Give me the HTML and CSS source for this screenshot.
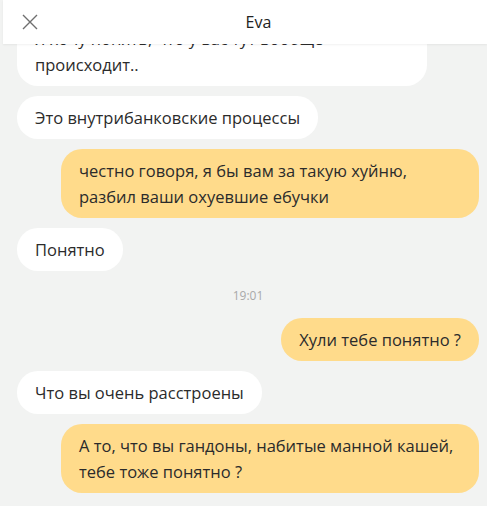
FILE: index.html
```html
<!DOCTYPE html>
<html lang="ru">
<head>
    <meta charset="UTF-8">
    <meta name="viewport" content="width=device-width, initial-scale=1.0">
    <title>Eva</title>
    <link rel="stylesheet" href="styles.css">
</head>
<body>

<div id="chat">
    <div class="header">
        <button class="close" aria-label="Закрыть">
            <svg width="16" height="16" viewBox="0 0 16 16">
                <path d="M1 1 L15 15 M15 1 L1 15" stroke="#6f6f6f" stroke-width="1.4" fill="none"/>
            </svg>
        </button>
        <div class="title">Eva</div>
    </div>

    <div class="messages">
        <div class="msg in">Я хочу понять, что у вас тут вообще происходит..</div>
        <div class="msg in">Это внутрибанковские процессы</div>
        <div class="msg out">честно говоря, я бы вам за такую хуйню, разбил ваши охуевшие ебучки</div>
        <div class="msg in">Понятно</div>
        <div class="time">19:01</div>
        <div class="msg out">Хули тебе понятно ?</div>
        <div class="msg in">Что вы очень расстроены</div>
        <div class="msg out">А то, что вы гандоны, набитые манной кашей, тебе тоже понятно ?</div>
    </div>
</div>

</body>
</html>
```

FILE: styles.css
```css
html, body {
    margin: 0;
    padding: 0;
    height: 100%;
}

body {
    font-family: 'Open Sans', 'Noto Sans', sans-serif;
    background-color: #f2f3f2;
    color: #2b2b2b;
    overflow: hidden;
}

#chat {
    display: flex;
    flex-direction: column;
    height: 506px;
}

.header {
    position: relative;
    z-index: 1;
    flex: 0 0 44px;
    display: flex;
    align-items: center;
    margin-left: 3px;
    background-color: #fff;
    box-shadow: 0 1px 2px rgba(0, 0, 0, 0.06);
}

.close {
    width: 16px;
    height: 16px;
    margin-left: 19px;
    padding: 0;
    border: none;
    background: none;
    display: flex;
}

.title {
    flex: 1;
    text-align: center;
    font-size: 16px;
    color: #222;
    margin-right: 32px;
    padding-left: 24px;
}

.messages {
    flex: 1;
    display: flex;
    flex-direction: column;
    justify-content: flex-end;
    overflow: hidden;
    padding: 0 8px 13px 17px;
    gap: 10px;
}

.msg {
    font-size: 16.5px;
    line-height: 26px;
    padding: 9px 18px 8px;
    border-radius: 21px;
    box-sizing: border-box;
}

.msg.in {
    align-self: flex-start;
    max-width: 410px;
    background-color: #fff;
}

.msg.out {
    align-self: flex-end;
    max-width: 418px;
    background-color: #ffdb8b;
}

.time {
    align-self: center;
    font-size: 12px;
    color: #a9a9a9;
    margin: 6px 0 4px;
}
```
